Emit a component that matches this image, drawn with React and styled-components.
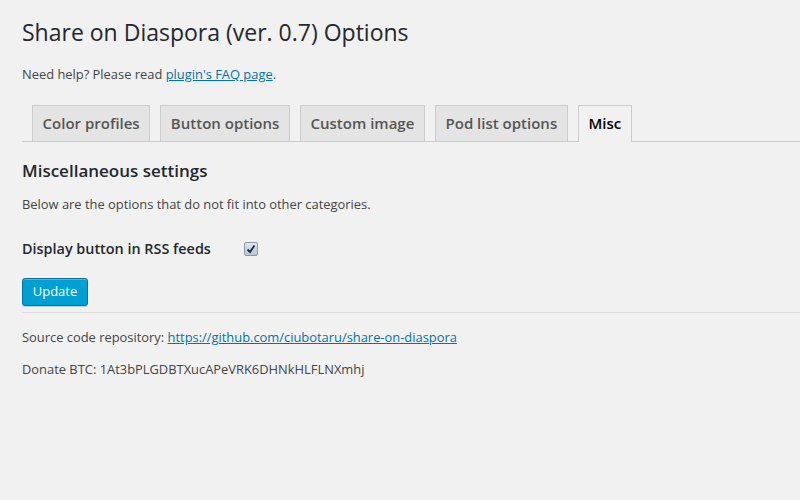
import React from 'react';
import styled, { createGlobalStyle } from 'styled-components';

const Global = createGlobalStyle`
  html, body { margin: 0; padding: 0; background: #f1f1f1; }
  body {
    font-family: "Open Sans", "Liberation Sans", sans-serif;
    font-size: 13px;
    line-height: 1.4em;
    color: #444;
  }
`;

const Wrap = styled.div`
  padding: 0 0 0 22px;
  width: 778px;
`;

const Title = styled.h2`
  font-size: 23px;
  font-weight: 400;
  line-height: 29px;
  color: #23282d;
  margin: 9px 0 0;
  padding: 9px 0 4px;
`;

const Para = styled.p`
  margin: ${p => p.$m || '13px 0'};
  font-size: 12.9px;
  line-height: 19.5px;
`;

const Link = styled.a`
  color: #0073aa;
  text-decoration: underline;
`;

const Tabs = styled.nav`
  display: flex;
  align-items: flex-end;
  border-bottom: 1px solid #ccc;
  margin-top: 20px;
  padding-left: 10px;
  gap: 10px;
`;

const Tab = styled.a`
  display: block;
  padding: 5px 9.6px;
  font-size: 15px;
  line-height: 25px;
  font-weight: 600;
  border: 1px solid #ccc;
  border-bottom: none;
  background: ${p => (p.$active ? '#f1f1f1' : '#e4e4e4')};
  color: ${p => (p.$active ? '#000' : '#555')};
  margin-bottom: ${p => (p.$active ? '-1px' : '0')};
  padding-bottom: ${p => (p.$active ? '6px' : '5px')};
`;

const Heading = styled.h3`
  font-size: 17px;
  font-weight: 600;
  color: #23282d;
  margin: 17px 0 0;
  line-height: 1.4;
`;

const Row = styled.div`
  display: flex;
  align-items: center;
  margin-top: 25px;
`;

const Label = styled.label`
  width: 222px;
  font-size: 14.4px;
  font-weight: 600;
  color: #23282d;
  line-height: 18px;
`;

const Check = styled.span`
  width: 12px;
  height: 12px;
  border: 1px solid #8a9aa8;
  border-radius: 2px;
  background: linear-gradient(#dfe6ee, #b9c7d6);
  display: flex;
  align-items: center;
  justify-content: center;
  margin-top: 1px;
`;

const Button = styled.button`
  display: block;
  margin-top: 20px;
  height: 28px;
  width: 66px;
  padding: 0 0 1px;
  font-family: inherit;
  font-size: 13px;
  color: #fff;
  background: #00a0d2;
  border: 1px solid #0073aa;
  border-radius: 3px;
  box-shadow: inset 0 1px 0 rgba(120, 200, 230, 0.6), 0 1px 0 rgba(0,0,0,0.15);
`;

const Rule = styled.hr`
  border: none;
  border-top: 1px solid #ddd;
  margin: 6px 0 0;
`;

export default function App() {
  return (
    <>
      <Global />
      <Wrap>
        <Title>Share on Diaspora (ver. 0.7) Options</Title>
        <Para $m="14px 0 0">
          Need help? Please read <Link href="#">plugin's FAQ page</Link>.
        </Para>
        <Tabs>
          <Tab>Color profiles</Tab>
          <Tab>Button options</Tab>
          <Tab>Custom image</Tab>
          <Tab>Pod list options</Tab>
          <Tab $active>Misc</Tab>
        </Tabs>
        <Heading>Miscellaneous settings</Heading>
        <Para $m="13px 0 0">Below are the options that do not fit into other categories.</Para>
        <Row>
          <Label>Display button in RSS feeds</Label>
          <Check>
            <svg width="10" height="10" viewBox="0 0 10 10">
              <path d="M1.5 5.5 L4 8 L8.5 1.5" fill="none" stroke="#1e2a3a" strokeWidth="1.8" />
            </svg>
          </Check>
        </Row>
        <Button>Update</Button>
        <Rule />
        <Para $m="15px 0 0">
          Source code repository: <Link href="#">https://github.com/ciubotaru/share-on-diaspora</Link>
        </Para>
        <Para $m="13px 0 0">Donate BTC: 1At3bPLGDBTXucAPeVRK6DHNkHLFLNXmhj</Para>
      </Wrap>
    </>
  );
}
